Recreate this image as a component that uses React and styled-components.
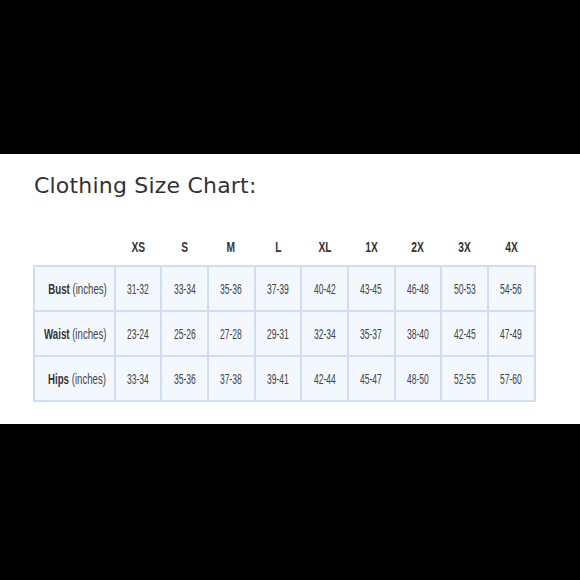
import React from "react"
import styled, { createGlobalStyle } from "styled-components"

const sizes = ["XS", "S", "M", "L", "XL", "1X", "2X", "3X", "4X"]

const rows = [
  {
    label: "Bust",
    values: ["31-32", "33-34", "35-36", "37-39", "40-42", "43-45", "46-48", "50-53", "54-56"],
  },
  {
    label: "Waist",
    values: ["23-24", "25-26", "27-28", "29-31", "32-34", "35-37", "38-40", "42-45", "47-49"],
  },
  {
    label: "Hips",
    values: ["33-34", "35-36", "37-38", "39-41", "42-44", "45-47", "48-50", "52-55", "57-60"],
  },
]

const GlobalStyle = createGlobalStyle`
  html, body {
    margin: 0;
    padding: 0;
    background: #000;
  }
`

const Page = styled.div`
  width: 580px;
  height: 580px;
  display: flex;
  flex-direction: column;
  background: #000;
`

const Band = styled.div`
  height: ${props => props.height}px;
  background: #000;
`

const Panel = styled.div`
  height: 270px;
  background: #fff;
  padding: 19px 0 0 34px;
  box-sizing: border-box;
`

const Title = styled.h1`
  margin: 0;
  font-family: "DejaVu Sans", Verdana, sans-serif;
  font-weight: normal;
  font-size: 22px;
  line-height: 26px;
  color: #333;
  letter-spacing: 0.2px;
`

const Table = styled.table`
  width: 501px;
  margin: 30px 0 0 -1px;
  border-collapse: collapse;
  table-layout: fixed;
  font-family: "Liberation Sans", Arial, sans-serif;
`

// arial narrow isn't around, so squeeze liberation sans
const Narrow = styled.span`
  display: inline-block;
  white-space: nowrap;
  transform: scaleX(${props => props.scale || 0.7});
  transform-origin: ${props => props.origin || "center"};
`

const HeadCell = styled.th`
  height: 36px;
  padding: 0;
  font-size: 14px;
  font-weight: bold;
  color: #333;
  text-align: center;
  vertical-align: middle;
  white-space: nowrap;
`

const Cell = styled.td`
  height: 43px;
  padding: 0;
  border: 2px solid #d0def5;
  background: #f3f7fe;
  color: #444;
  font-size: 14px;
  white-space: nowrap;
  text-align: center;
  vertical-align: middle;
`

const LabelBox = styled.div`
  display: flex;
  justify-content: flex-end;
  padding-right: 7px;
`

const Label = styled(Narrow)`
  flex-shrink: 0;
  color: #444;

  b {
    color: #333;
  }
`

const App = () => {
  return (
    <>
      <GlobalStyle />
      <Page>
        <Band height={154} />
        <Panel>
          <Title>Clothing Size Chart:</Title>
          <Table>
            <colgroup>
              <col style={{ width: 80.5 }} />
              {sizes.map(s => (
                <col key={s} style={{ width: 46.7 }} />
              ))}
            </colgroup>
            <thead>
              <tr>
                <HeadCell />
                {sizes.map(s => (
                  <HeadCell key={s}>
                    <Narrow scale={0.73}>{s}</Narrow>
                  </HeadCell>
                ))}
              </tr>
            </thead>
            <tbody>
              {rows.map(row => (
                <tr key={row.label}>
                  <Cell>
                    <LabelBox>
                      <Label scale={0.69} origin="right">
                        <b>{row.label}</b> (inches)
                      </Label>
                    </LabelBox>
                  </Cell>
                  {row.values.map((v, i) => (
                    <Cell key={i}>
                      <Narrow scale={0.61}>{v}</Narrow>
                    </Cell>
                  ))}
                </tr>
              ))}
            </tbody>
          </Table>
        </Panel>
        <Band height={156} />
      </Page>
    </>
  )
}

export default App
